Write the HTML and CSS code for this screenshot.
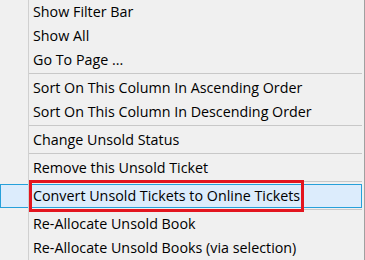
FILE: index.html
```html
<!DOCTYPE html>
<html>
<head>
<meta charset="utf-8">
<link rel="stylesheet" href="styles.css">
</head>
<body>
<div class="menu">
  <div class="item"><span class="gut"></span><span class="label">Show Filter Bar</span></div>
  <div class="item"><span class="gut"></span><span class="label">Show All</span></div>
  <div class="item"><span class="gut"></span><span class="label">Go To Page ...</span></div>
  <div class="sep"><span class="gut"></span><span class="line"></span></div>
  <div class="item"><span class="gut"></span><span class="label">Sort On This Column In Ascending Order</span></div>
  <div class="item"><span class="gut"></span><span class="label">Sort On This Column In Descending Order</span></div>
  <div class="sep"><span class="gut"></span><span class="line"></span></div>
  <div class="item"><span class="gut"></span><span class="label">Change Unsold Status</span></div>
  <div class="sep"><span class="gut"></span><span class="line"></span></div>
  <div class="item"><span class="gut"></span><span class="label">Remove this Unsold Ticket</span></div>
  <div class="sep"><span class="gut"></span><span class="line"></span></div>
  <div class="item active"><span class="gut"></span><span class="label">Convert Unsold Tickets to Online Tickets</span><span class="mark"></span></div>
  <div class="sep"><span class="gut"></span><span class="line"></span></div>
  <div class="item"><span class="gut"></span><span class="label">Re-Allocate Unsold Book</span></div>
  <div class="item"><span class="gut"></span><span class="label">Re-Allocate Unsold Books (via selection)</span></div>
</div>
</body>
</html>
```
FILE: styles.css
```css
html, body {
  margin: 0;
  padding: 0;
  background: #f0f0f0;
}
body {
  width: 365px;
  height: 260px;
  overflow: hidden;
  font-family: "Open Sans", "Noto Sans", sans-serif;
  font-size: 14.3px;
  color: #000;
}
.menu {
  width: 365px;
  height: 260px;
  box-sizing: border-box;
  border-right: 1px solid #a0a0a0;
  padding-right: 2px;
  background: #f0f0f0;
}
.item {
  position: relative;
  display: grid;
  grid-template-columns: 29px 1fr;
  height: 24px;
  align-items: center;
}
.gut {
  align-self: stretch;
  border-right: 1px solid #d0d0d0;
  box-sizing: border-box;
}
.label {
  padding-left: 4px;
  white-space: nowrap;
  line-height: 24px;
}
.sep {
  display: grid;
  grid-template-columns: 29px 1fr;
  height: 4px;
}
.line {
  margin-top: 1px;
  height: 1px;
  background: #c8c8c8;
}
.active {
  background: #dcecfc;
  box-shadow: inset 0 0 0 1px #26a0da;
}
.mark {
  position: absolute;
  left: 29px;
  top: -4px;
  width: 275px;
  height: 32px;
  box-sizing: border-box;
  border: 3px solid #e3151f;
}
```
